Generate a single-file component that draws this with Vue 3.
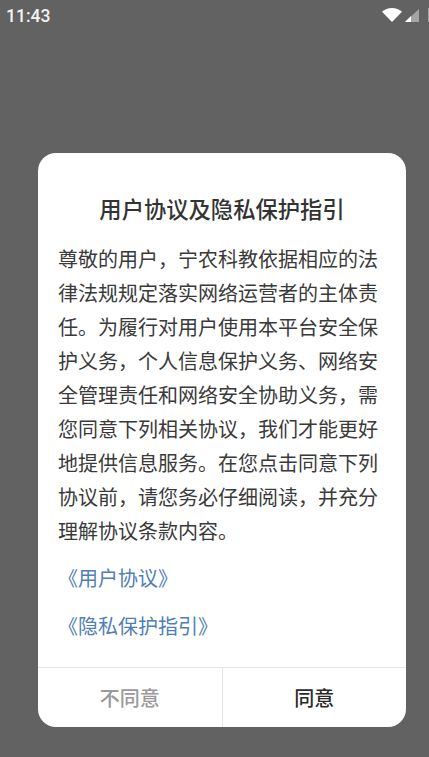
<script setup>
const body = '尊敬的用户，宁农科教依据相应的法律法规规定落实网络运营者的主体责任。为履行对用户使用本平台安全保护义务，个人信息保护义务、网络安全管理责任和网络安全协助义务，需您同意下列相关协议，我们才能更好地提供信息服务。在您点击同意下列协议前，请您务必仔细阅读，并充分理解协议条款内容。'
</script>

<template>
  <div class="screen">
    <div class="status">
      <span class="time">11:43</span>
      <div class="icons">
        <svg class="wifi" width="20" height="14" viewBox="0 0 20 14">
          <path d="M0 3.800C2.700 1.300 6.200 0 10 0S17.300 1.300 20 3.800L10 14Z" fill="#fff" />
        </svg>
        <svg class="signal" width="14" height="13" viewBox="0 0 14 13">
          <path d="M14 0V13H0Z" fill="#a4a4a4" />
          <path d="M6 7V13H0Z" fill="#fff" />
        </svg>
        <span class="battery"></span>
      </div>
    </div>
    <div class="center">
      <div class="dialog">
        <div class="title">用户协议及隐私保护指引</div>
        <p class="body">{{ body }}</p>
        <a class="link first">《用户协议》</a>
        <a class="link second">《隐私保护指引》</a>
        <div class="actions">
          <div class="btn no">不同意</div>
          <div class="btn yes">同意</div>
        </div>
      </div>
    </div>
  </div>
</template>

<style>
html, body { margin: 0; background: #626262; }
</style>

<style scoped>
.screen {
  width: 429px;
  height: 757px;
  background: #626262;
  display: flex;
  flex-direction: column;
  overflow: hidden;
  font-family: "Noto Sans CJK SC", "Noto Sans", sans-serif;
}
.status {
  height: 31px;
  display: flex;
  justify-content: space-between;
  align-items: center;
  padding-left: 6px;
  flex: none;
}
.time {
  font-family: Roboto, sans-serif;
  font-size: 17.500px;
  font-weight: 500;
  color: #f2f2f2;
}
.icons {
  display: flex;
  align-items: flex-start;
  align-self: flex-start;
  margin-top: 8px;
  margin-right: -7px;
}
.wifi { flex: none; }
.signal {
  flex: none;
  margin: 1px 9px 0 3px;
}
.battery {
  flex: none;
  width: 8px;
  height: 14px;
  background: #a4a4a4;
}
.center {
  padding: 122.300px 23px 0 38px;
}
.dialog {
  height: 574px;
  background: #fff;
  border-radius: 18px;
  display: flex;
  flex-direction: column;
  overflow: hidden;
}
.title {
  margin-top: 39px;
  text-align: center;
  font-size: 22.300px;
  line-height: 32px;
  font-weight: 500;
  color: #333;
}
.body {
  margin: 18px 20px 0;
  font-size: 20px;
  line-height: 34px;
  color: #3a3a3a;
}
.link {
  display: block;
  margin-left: 20px;
  font-size: 20px;
  line-height: 34px;
  color: #4f7fb5;
}
.first { margin-top: 13px; }
.second { margin-top: 14px; }
.actions {
  margin-top: auto;
  height: 59px;
  display: flex;
  border-top: 1px solid #e5e5e5;
}
.btn {
  flex: 1;
  display: flex;
  align-items: center;
  justify-content: center;
  font-size: 20px;
  font-weight: 500;
}
.no {
  color: #999;
  border-right: 1px solid #e5e5e5;
}
.yes {
  color: #2a2a2a;
}
</style>
